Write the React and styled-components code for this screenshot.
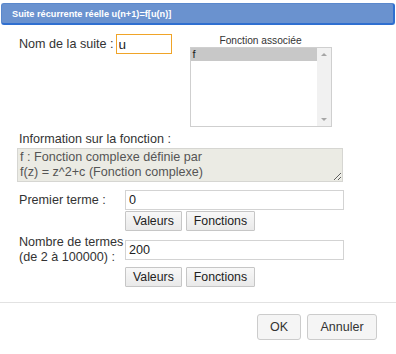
import styled, { createGlobalStyle } from "styled-components";

const GlobalStyle = createGlobalStyle`
  html, body {
    margin: 0;
    padding: 0;
    background: #ffffff;
  }
  body {
    font-family: "Liberation Sans", Arial, sans-serif;
    color: #333333;
  }
`;

const Dialog = styled.div`
  width: 396px;
  height: 354px;
  display: flex;
  flex-direction: column;
  background: #ffffff;
  box-sizing: border-box;
`;

const TitleBar = styled.div`
  margin: 3px 1px 0 1px;
  height: 22px;
  box-sizing: border-box;
  display: flex;
  align-items: center;
  padding-left: 10px;
  background: #6a92cf;
  border: 1px solid #5a88cc;
  border-right: 2px solid #2f6fd0;
  border-bottom: 2px solid #2f6fd0;
  border-radius: 3px;
  color: #ffffff;
  font-weight: bold;
  font-size: 9.2px;
`;

const Content = styled.div`
  padding: 9px 17px 0 17px;
  display: flex;
  flex-direction: column;
`;

const TopRow = styled.div`
  display: flex;
  align-items: flex-start;
`;

const NameGroup = styled.div`
  display: flex;
  align-items: center;
  gap: 2px;
  padding-left: 2px;
`;

const Label = styled.span`
  font-size: 12.6px;
  line-height: 15px;
  white-space: nowrap;
`;

const TextInput = styled.input`
  box-sizing: border-box;
  height: 20px;
  width: ${(p) => p.$width || "100%"};
  border: 1px solid ${(p) => (p.$focus ? "#f0a428" : "#d3d3d3")};
  padding: 0 ${(p) => (p.$focus ? "2px" : "3px")};
  margin: 0;
  font-family: "Liberation Sans", Arial, sans-serif;
  font-size: ${(p) => (p.$focus ? "13.5px" : "12.6px")};
  color: #222222;
  background: #ffffff;
  outline: none;
`;

const ListGroup = styled.div`
  margin-left: 18px;
  width: 142px;
  display: flex;
  flex-direction: column;
  align-items: center;
`;

const Caption = styled.div`
  font-size: 10.2px;
  line-height: 13px;
  color: #333333;
`;

const ListBox = styled.div`
  box-sizing: border-box;
  width: 142px;
  height: 80px;
  border: 1px solid #cfcfcf;
  display: flex;
`;

const ListItems = styled.div`
  flex: 1;
  display: flex;
  flex-direction: column;
`;

const ListItem = styled.div`
  height: 13px;
  line-height: 13px;
  font-size: 11px;
  padding-left: 2px;
  background: ${(p) => (p.$selected ? "#c8c8c8" : "transparent")};
  color: #222222;
`;

const ScrollTrack = styled.div`
  width: 14px;
  background: #f1f1f1;
  display: flex;
  flex-direction: column;
  justify-content: space-between;
  align-items: center;
  padding: 5px 0;
`;

const Arrow = styled.div`
  width: 0;
  height: 0;
  border-left: 3px solid transparent;
  border-right: 3px solid transparent;
  ${(p) =>
    p.$down
      ? "border-top: 3px solid #a6a6a6;"
      : "border-bottom: 3px solid #a6a6a6;"}
`;

const InfoLabel = styled(Label)`
  display: block;
  margin-top: 5px;
  padding-left: 2px;
`;

const InfoArea = styled.textarea`
  box-sizing: border-box;
  margin: 1px 0 0 0;
  width: 326px;
  height: 34px;
  padding: 1px 2px;
  border: 1px solid #d6d6d2;
  background: #ebebe4;
  color: #555555;
  font-family: "Liberation Sans", Arial, sans-serif;
  font-size: 12.6px;
  line-height: 15px;
  overflow: hidden;
  outline: none;
`;

const FormGrid = styled.div`
  display: grid;
  grid-template-columns: 106px 219px;
  align-items: center;
  row-gap: 1px;
  margin-top: 8px;
  padding-left: 2px;
`;

const FieldLabel = styled(Label)`
  grid-column: 1;
  margin-top: ${(p) => p.$gap || "0"};
`;

const Field = styled.div`
  grid-column: 2;
  margin-top: ${(p) => p.$gap || "0"};
`;

const ButtonRow = styled.div`
  grid-column: 2;
  display: flex;
  gap: 4px;
  margin-top: ${(p) => p.$gap || "0"};
`;

const SmallButton = styled.button`
  box-sizing: border-box;
  height: 20px;
  padding: 0 7px;
  margin: 0;
  border: 1px solid #c6c6c6;
  border-radius: 1px;
  background: linear-gradient(#f8f8f8, #e9e9e9);
  font-family: "Liberation Sans", Arial, sans-serif;
  font-size: 12.3px;
  color: #222222;
`;

const Separator = styled.div`
  height: 1px;
  background: #e2e2e2;
  margin-top: 15px;
`;

const Footer = styled.div`
  display: flex;
  justify-content: flex-end;
  gap: 6px;
  padding: 11px 19px 0 0;
`;

const DialogButton = styled.button`
  box-sizing: border-box;
  height: 26px;
  min-width: ${(p) => p.$width};
  margin: 0;
  padding: 0 10px;
  border: 1px solid #cccccc;
  border-radius: 3px;
  background: #f5f5f5;
  font-family: "Liberation Sans", Arial, sans-serif;
  font-size: 12.5px;
  color: #333333;
`;

export default function App() {
  return (
    <>
      <GlobalStyle />
      <Dialog>
        <TitleBar>Suite récurrente réelle u(n+1)=f[u(n)]</TitleBar>
        <Content>
          <TopRow>
            <NameGroup>
              <Label>Nom de la suite :</Label>
              <TextInput $focus $width="56px" defaultValue="u" />
            </NameGroup>
            <ListGroup>
              <Caption>Fonction associée</Caption>
              <ListBox>
                <ListItems>
                  <ListItem $selected>f</ListItem>
                </ListItems>
                <ScrollTrack>
                  <Arrow />
                  <Arrow $down />
                </ScrollTrack>
              </ListBox>
            </ListGroup>
          </TopRow>
          <InfoLabel>Information sur la fonction :</InfoLabel>
          <InfoArea
            readOnly
            defaultValue={
              "f : Fonction complexe définie par\nf(z) = z^2+c (Fonction complexe)"
            }
          />
          <FormGrid>
            <FieldLabel>Premier terme :</FieldLabel>
            <Field>
              <TextInput defaultValue="0" />
            </Field>
            <ButtonRow>
              <SmallButton>Valeurs</SmallButton>
              <SmallButton>Fonctions</SmallButton>
            </ButtonRow>
            <FieldLabel $gap="3px">
              Nombre de termes
              <br />
              (de 2 à 100000) :
            </FieldLabel>
            <Field $gap="3px">
              <TextInput defaultValue="200" />
            </Field>
            <ButtonRow $gap="1px">
              <SmallButton>Valeurs</SmallButton>
              <SmallButton>Fonctions</SmallButton>
            </ButtonRow>
          </FormGrid>
        </Content>
        <Separator />
        <Footer>
          <DialogButton $width="44px">OK</DialogButton>
          <DialogButton $width="70px">Annuler</DialogButton>
        </Footer>
      </Dialog>
    </>
  );
}
